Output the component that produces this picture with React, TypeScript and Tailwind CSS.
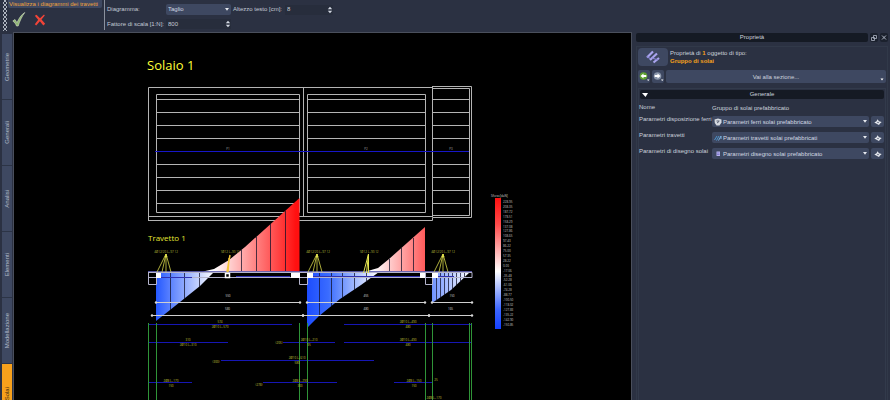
import type { ReactNode } from 'react';

const SIDE_TABS = ['Geometrie', 'Generali', 'Analisi', 'Elementi', 'Modellazione'];

const PARAMS = [
  { id: 'ferri', label: 'Parametri disposizione ferri', value: 'Parametri ferri solai prefabbricato', icon: <ShieldIcon /> },
  { id: 'travetti', label: 'Parametri travetti', value: 'Parametri travetti solai prefabbricati', icon: <WaveIcon /> },
  { id: 'disegno', label: 'Parametri di disegno solai', value: 'Parametri disegno solai prefabbricato', icon: <DocIcon /> },
];

const SLAB_LINES = [99, 112, 125, 138, 164, 177, 190, 203];

const LEGEND = [
  '228.95', '208.35', '187.72', '178.51', '158.29', '137.08', '127.86', '108.65', '97.43', '86.22', '75.00', '57.35', '28.22',
  '0.00', '-17.06', '-35.48', '-52.28', '-61.06', '-74.28', '-88.77', '-100.50', '-118.02', '-127.83', '-135.22', '-142.90', '-150.85',
];

// [x1, x2, y] of every reinforcement bar below the beam
const BARS = [
  [148, 292, 324], [344, 472, 324], [148, 228, 342], [283, 335, 342], [344, 472, 342],
  [221, 374, 360], [148, 192, 382], [263, 337, 382], [394, 433, 382],
];

const BAR_LABELS: [string, number, number][] = [
  ['574', 220, 323], ['2Ø10 L=570', 220, 328], ['310', 188, 341], ['2Ø10 L=310', 188, 346],
  ['2Ø10 L=490', 408, 323], ['480', 408, 328], ['2Ø10 L=490', 408, 341], ['480', 408, 346],
  ['(205)', 279, 344], ['2Ø10 L=210', 309, 341], ['95', 309, 346],
  ['(300)', 216, 363], ['2Ø10 L=610', 297, 359], ['580', 297, 364],
  ['2Ø8 L=170', 171, 382], ['150', 171, 387], ['(278)', 259, 386], ['2Ø8 L=290', 300, 382], ['300', 300, 387],
  ['2Ø8 L=150', 414, 382], ['150', 414, 387], ['25', 436, 381], ['2Ø8 L=170', 434, 399],
];

function ShieldIcon() {
  return (
    <svg viewBox="0 0 8 8" className="size-2 shrink-0">
      <path d="M.5 1.500 4 .5l3.500 1v3L5.500 7.500h-3L.8 5z" fill="#d5d9e0" />
      <path d="M2.500 3h3M3 5l2-1.500" stroke="#3a4358" strokeWidth=".8" />
    </svg>
  );
}

function WaveIcon() {
  return (
    <svg viewBox="0 0 8 8" className="size-2 shrink-0" fill="none" strokeWidth=".9">
      <path d="M.5 6 3 2M2.500 6.500 5 2" stroke="#4f9bd6" />
      <path d="M4.500 6.500 7 2v3" stroke="#7fb9e6" />
    </svg>
  );
}

function DocIcon() {
  return (
    <svg viewBox="0 0 8 8" className="size-2 shrink-0">
      <path d="M2.500 1.500h3.500v4.500H2.500z" fill="#b9b4f0" />
      <path d="M3 3h2.500M3 4.500h2.500" stroke="#5f5ac0" strokeWidth=".6" />
    </svg>
  );
}

function Spinner() {
  return (
    <svg viewBox="0 0 6 8" className="h-2 w-1.5 shrink-0" fill="#d4d9e3">
      <path d="M3 .8 5.200 3.300H.8zM3 7.200.8 4.700h4.400z" />
    </svg>
  );
}

function Select({ id, value, children }: { id: string; value: string; children?: ReactNode }) {
  return (
    <div className="relative flex h-[11px] min-w-0 flex-1 items-center gap-px rounded-xs bg-[#3e4861] pl-0.5">
      {children}
      <select id={id} className="h-full w-full appearance-none bg-transparent text-[#d3d8e2] outline-none">
        <option>{value}</option>
      </select>
      <svg viewBox="0 0 4 3" className="pointer-events-none absolute right-0.5 h-[3px] w-1" fill="#e6e9ef">
        <path d="M0 0h4L2 2.800z" />
      </svg>
    </div>
  );
}

function Toolbar() {
  return (
    <header className="flex h-8 shrink-0 text-[#c3c9d5]">
      <svg className="h-[31px] w-2 shrink-0" fill="#aeb4bf">
        <defs>
          <pattern id="grip" width="4" height="4" patternUnits="userSpaceOnUse">
            <path d="M0 0h2v2H0zM2 2h2v2H2z" />
          </pattern>
        </defs>
        <rect x="3" width="4" height="31" fill="url(#grip)" />
      </svg>
      <div className="h-[30px] w-[97px] shrink-0 border-r border-[#8b919e]">
        <div className="h-2 w-[94px] rounded-b-xs bg-[#3e4861] pl-px leading-[8px] whitespace-nowrap text-[#f0a43c]">Visualizza i diagrammi dei travetti</div>
        <div className="flex items-center gap-2 pt-1 pl-1">
          <button aria-label="Conferma">
            <svg viewBox="0 0 14 15" className="h-[15px] w-3.5">
              <path d="M.8 9 3 7.500l2 3.200C7 6 9.500 2.500 12.800.5c-3 4-5 8.500-6.600 13.500H4.500C3.800 12 2.500 10.200.8 9z" fill="#8fb573" stroke="#d6e3c8" strokeWidth=".6" />
            </svg>
          </button>
          <button aria-label="Annulla">
            <svg viewBox="0 0 12 12" className="size-3">
              <path d="M.8 1.800 2.500.8l3.500 3.400L10 .6l.8.8L7.500 5.500l3.700 4.300-1.900 1.600L5.900 7.300 2.200 11.400.8 10.300l3.400-4.600z" fill="#f04438" />
            </svg>
          </button>
        </div>
      </div>
      <div className="grid grid-cols-[59px_65px_54px_48px] content-start items-center gap-y-1 pt-1 pl-0.5">
        <label htmlFor="diagramma">Diagramma:</label>
        <Select id="diagramma" value="Taglio" />
        <label htmlFor="altezza" className="pl-0.5 whitespace-nowrap">Altezzo testo [cm]:</label>
        <div className="flex h-[10px] items-center bg-[#272d3c] pl-0.5">
          <input id="altezza" defaultValue="8" className="w-full min-w-0 bg-transparent outline-none" />
          <Spinner />
        </div>
        <label htmlFor="scala" className="whitespace-nowrap">Fattore di scala [1:N]:</label>
        <div className="flex h-[10px] items-center bg-[#272d3c] pl-0.5">
          <input id="scala" defaultValue="800" className="w-full min-w-0 bg-transparent outline-none" />
          <Spinner />
        </div>
      </div>
    </header>
  );
}

function SideTabs() {
  return (
    <nav className="ml-0.5 flex w-[10px] shrink-0 flex-col pt-0.5 text-[#b4bccb]">
      {SIDE_TABS.map((tab) => (
        <button key={tab} className="flex h-[66px] shrink-0 items-center justify-center border-b border-[#2c3446] bg-[#3e4861] [writing-mode:sideways-lr]">
          {tab}
        </button>
      ))}
      <button className="flex min-h-0 flex-1 items-center justify-start bg-[#f7a11c] text-[#3b2a10] [writing-mode:sideways-lr]">Solai</button>
    </nav>
  );
}

function Rays({ x }: { x: number }) {
  return (
    <g stroke="#d8d84a" strokeWidth=".8">
      <path d={`M${x} 254l-9 18M${x} 254l-4 18M${x} 254v18M${x} 254l5 18`} fill="none" />
      <path d={`M${x - 1} 257h2l-1-3z`} fill="#ffff60" />
    </g>
  );
}

function Dimension({ from, to, y, label }: { from: number; to: number; y: number; label: string }) {
  return (
    <g fill="#d8d8d8">
      <path d={`M${from} ${y + 0.5}H${to}`} stroke="#cfcfcf" />
      <circle cx={from} cy={y + 0.5} r="1.200" />
      <circle cx={to} cy={y + 0.5} r="1.200" />
      <text x={(from + to) / 2} y={y - 5} fontSize="3" textAnchor="middle">{label}</text>
    </g>
  );
}

function Drawing() {
  return (
    <svg viewBox="14 33 617 367" preserveAspectRatio="xMinYMin meet" className="block h-full w-full" fill="none">
      <defs>
        <linearGradient id="red1" gradientUnits="userSpaceOnUse" x1="214" x2="296">
          <stop offset="0" stopColor="#fff" />
          <stop offset=".5" stopColor="#ff8585" />
          <stop offset="1" stopColor="#ff1010" />
        </linearGradient>
        <linearGradient id="blue1" gradientUnits="userSpaceOnUse" x1="156" x2="214">
          <stop offset="0" stopColor="#2458ff" />
          <stop offset="1" stopColor="#fff" />
        </linearGradient>
        <linearGradient id="red2" gradientUnits="userSpaceOnUse" x1="374" x2="425">
          <stop offset="0" stopColor="#fff" />
          <stop offset="1" stopColor="#ff5a5a" />
        </linearGradient>
        <linearGradient id="blue2" gradientUnits="userSpaceOnUse" x1="307" x2="378">
          <stop offset="0" stopColor="#1c4cff" />
          <stop offset=".3" stopColor="#3a6cff" />
          <stop offset="1" stopColor="#fff" />
        </linearGradient>
        <linearGradient id="blue3" gradientUnits="userSpaceOnUse" x1="432" x2="470">
          <stop offset="0" stopColor="#6f92ff" />
          <stop offset="1" stopColor="#fff" />
        </linearGradient>
        <linearGradient id="scale" x2="0" y2="1">
          <stop offset="0" stopColor="#ff1010" />
          <stop offset=".2" stopColor="#ff4a4a" />
          <stop offset=".56" stopColor="#fff" />
          <stop offset=".85" stopColor="#3c66ff" />
          <stop offset="1" stopColor="#1440ff" />
        </linearGradient>
      </defs>

      <text x="147" y="70" fontSize="13" fill="#ffff38">Solaio 1</text>
      <text x="148" y="241" fontSize="8" fill="#e6e634">Travetto 1</text>

      {/* plan */}
      <g stroke="#b4b4b4">
        <path d="M148.500 220.500V87.500H432M148 216.500h284M148 220.500h284.500v-3M303.500 87v129" />
        <path d="M156.500 94.500h143v118h-143zM307.500 94.500h118v118h-118z" />
        <path d="M432.500 86v131M432 86.500h39.500v131h-39M432 88.500h37.500v127h-37" />
        {SLAB_LINES.map((y) => (
          <path key={y} d={`M156 ${y + 0.5}h143M307 ${y + 0.5}h118M432 ${y + 0.5}h37`} />
        ))}
      </g>
      <path d="M155 151.500h314" stroke="#1616c8" />
      <g fontSize="3" fill="#a0a0a0" textAnchor="middle">
        <text x="228" y="150">P1</text>
        <text x="366" y="150">P2</text>
        <text x="451" y="150">P3</text>
      </g>

      {/* shear diagram */}
      <path d="M203 271.500 214 269l15-9 16-13 54.500-49v73.500z" fill="url(#red1)" />
      <path d="M156 272h58l-14 14-30 24-14 11z" fill="url(#blue1)" />
      <path d="M366 271.500 378 268l11-9 36-32v44.500z" fill="url(#red2)" />
      <path d="M307 272h72l-18 13-21 14-21 17-12 12z" fill="url(#blue2)" />
      <path d="M432 272h38l-19 18-19 13z" fill="url(#blue3)" />
      <g stroke="#10102a" strokeOpacity=".75">
        <path d="M170.500 273v37M184.500 273v26M199.500 273v14M241.500 250v21M256.500 237v34M270.500 224v47M285.500 211v60" />
        <path d="M319.500 273v43M331.500 273v33M342.500 273v25M354.500 273v17M366.500 273v9M389.500 259v12M401.500 248v23M413.500 238v33" />
        <path d="M436.500 273v28M440.500 273v25M444.500 273v22M448.500 273v19M452.500 273v16M456.500 273v12M460.500 273v9M464.500 273v5" />
      </g>

      {/* beam and supports */}
      <g stroke="#b4b4cc">
        <path d="M148 272.500h324v5H148M148.500 272v12.500h8V272M299.500 272v12.500h8V272M425.500 272v12.500h7V272" />
        <path d="M148 271.500h324" stroke="#6a6ac8" strokeWidth=".8" />
        <path d="M160 277.500h32M236 276.500h54M312 276.500h108M434 276.500h20" stroke="#3030b0" />
      </g>
      <path d="M156 273h5v5h-5zM291 273h9v5h-9zM307 273h6v5h-6zM420 273h5v5h-5zM432 273h6v5h-6z" fill="#fff" />
      <path d="M225.500 273.500h4v4h-4z" stroke="#fff" strokeWidth="1.500" />
      <Rays x={166} />
      <Rays x={317} />
      <Rays x={443} />
      <path d="M230 255l-3 17M229 258l-1 14" stroke="#f2c53a" strokeWidth="1.500" />
      <path d="M368.500 254l-5 19M368.500 254l-2 19M368.500 254v19" stroke="#e6e650" />
      <g fontSize="3" fill="#b4b43a" textAnchor="middle">
        <text x="166" y="253">4Ø12/20 L=97 12</text>
        <text x="230" y="253">1Ø12 L=90 12</text>
        <text x="318" y="253">4Ø12/20 L=97 12</text>
        <text x="369" y="253">1Ø12 L=90 12</text>
        <text x="443" y="253">4Ø12/20 L=97 12</text>
      </g>

      <Dimension from={156} to={300} y={302} label="550" />
      <Dimension from={307} to={425} y={302} label="455" />
      <Dimension from={432} to={472} y={302} label="150" />
      <Dimension from={152} to={303} y={315} label="580" />
      <Dimension from={303} to={429} y={315} label="480" />
      <Dimension from={429} to={472} y={315} label="165" />

      {/* reinforcement bars */}
      {BARS.map(([x1, x2, y]) => (
        <path key={`${x1}-${y}`} d={`M${x1} ${y + 0.5}H${x2}`} stroke="#1616b4" />
      ))}
      <path d="M148.500 323v77M156.500 323v77M299.500 323v77M307.500 323v77M425.500 323v77M432.500 323v77M469.500 323v77M471.500 323v77" stroke="#2f9438" />
      <g fontSize="3" fill="#c4c43c" textAnchor="middle">
        {BAR_LABELS.map(([text, x, y]) => (
          <text key={`${x}-${y}`} x={x} y={y}>{text}</text>
        ))}
      </g>

      {/* colour scale */}
      <text x="491" y="197" fontSize="3" fill="#d0d0d0">Sforzo[daN]</text>
      <rect x="495" y="198" width="6" height="131" fill="url(#scale)" />
      <g fontSize="3" fill="#c8c8c8">
        {LEGEND.map((text, i) => (
          <text key={text} x="503" y={203 + i * 4.9}>{text}</text>
        ))}
      </g>
    </svg>
  );
}

function NavButton({ label, color }: { label: string; color: string }) {
  return (
    <button aria-label={label} className="flex h-[13px] w-3 items-center justify-center rounded-xs bg-[#3e4861]">
      <svg viewBox="0 0 12 13" className="h-[13px] w-3">
        <circle cx="5.500" cy="6" r="3.800" fill={color} />
        <path d={label === 'Indietro' ? 'M2.500 6l3-2.600v1.600H8.300v2H5.500v1.600z' : 'M8.500 6l-3-2.600v1.600H2.700v2h2.800v1.600z'} fill="#fff" />
        <path d="M9 9.500h2.500L10.200 11z" fill="#fff" />
      </svg>
    </button>
  );
}

function PropertiesPanel() {
  return (
    <aside className="ml-1 flex w-[254px] shrink-0 flex-col pt-px pr-0.5 leading-[8px] text-[#cdd2dc]">
      <div className="flex h-[9px] items-center gap-0.5">
        <h2 className="h-full flex-1 rounded-xs bg-[#151a24] text-center leading-[9px]">Proprietà</h2>
        <button aria-label="Sgancia" className="rounded-xs bg-[#1b212d]">
          <svg viewBox="0 0 8 9" className="h-[9px] w-2" fill="none" stroke="#aeb5c4" strokeWidth=".8">
            <path d="M3.500 2.500h3v3h-3zM1.500 4.500h3v3h-3z" />
          </svg>
        </button>
        <button aria-label="Chiudi" className="rounded-xs bg-[#1b212d]">
          <svg viewBox="0 0 8 9" className="h-[9px] w-2" fill="none" stroke="#aeb5c4">
            <path d="M2 2.500l4 4M6 2.500l-4 4" />
          </svg>
        </button>
      </div>
      <div className="mt-1 flex flex-1 flex-col border border-b-0 border-[#313949] px-px pt-px">
        <div className="flex items-center gap-0.5">
          <div className="flex h-[18px] w-[30px] items-center justify-center rounded-sm bg-[#3e4861]">
            <svg viewBox="0 0 16 14" className="h-3.5 w-4" stroke="#a9a4ee" strokeWidth="2.200">
              <path d="M2 7.500 8 1.500M5 10 12 3.500M8.500 12.500 14 8" />
              <path d="M2 6.500l3 2M7 8l6 2" strokeWidth="1.200" stroke="#8984d4" />
            </svg>
          </div>
          <p>
            Proprietà di <b className="text-[#f7a11c]">1</b> oggetto di tipo:
            <br />
            <b className="text-[#f7a11c]">Gruppo di solai</b>
          </p>
        </div>
        <div className="mt-1 flex gap-0.5">
          <NavButton label="Indietro" color="#5da130" />
          <NavButton label="Avanti" color="#8793a8" />
          <button className="relative h-[13px] flex-1 rounded-xs bg-[#3e4861]">
            Vai alla sezione...
            <svg viewBox="0 0 4 3" className="absolute right-0.5 bottom-0.5 h-[3px] w-1" fill="#fff"><path d="M.5.5h3L2 2.500z" /></svg>
          </button>
        </div>
        <section className="mt-[5px] flex-1 border border-b-0 border-[#323a4b] p-px">
          <h3 className="relative h-[9px] rounded-xs bg-[#151a24] text-center leading-[9px]">
            <svg viewBox="0 0 6 4" className="absolute top-[3px] left-0.5 h-1 w-1.5" fill="#fff"><path d="M0 0h6L3.500 4z" /></svg>
            Generale
          </h3>
          <div className="mt-1 -ml-px flex flex-col gap-[5px]">
            <div className="flex h-2">
              <span className="w-[73px]">Nome</span>
              <span className="pt-px">Gruppo di solai prefabbricato</span>
            </div>
            {PARAMS.map((param) => (
              <div key={param.id} className="flex h-[11px]">
                <label htmlFor={param.id} className="-mt-px w-[73px] shrink-0 whitespace-nowrap">{param.label}</label>
                <Select id={param.id} value={param.value}>{param.icon}</Select>
                <button aria-label="Modifica" className="ml-0.5 flex w-[13px] items-center justify-center rounded-xs bg-[#3e4861]">
                  <svg viewBox="0 0 8 8" className="size-2" fill="#e4e7ed">
                    <path d="M.3 4.500 2.500 3.300 3.500 1.300l1.500 1.900 2.700.8-1.700 1.500L5 7 3.500 6.200z" />
                    <circle cx="4" cy="4.500" r=".7" fill="#3e4861" />
                  </svg>
                </button>
              </div>
            ))}
          </div>
        </section>
      </div>
    </aside>
  );
}

export default function App() {
  return (
    <div className="flex h-screen flex-col overflow-hidden bg-[#2b3142] font-['Liberation_Sans',sans-serif] text-[6px]">
      <Toolbar />
      <div className="flex min-h-0 flex-1">
        <SideTabs />
        <main className="ml-px min-w-0 flex-1 border-x border-t border-[#4a4f5c] bg-black font-['Open_Sans',sans-serif]">
          <Drawing />
        </main>
        <PropertiesPanel />
      </div>
    </div>
  );
}
